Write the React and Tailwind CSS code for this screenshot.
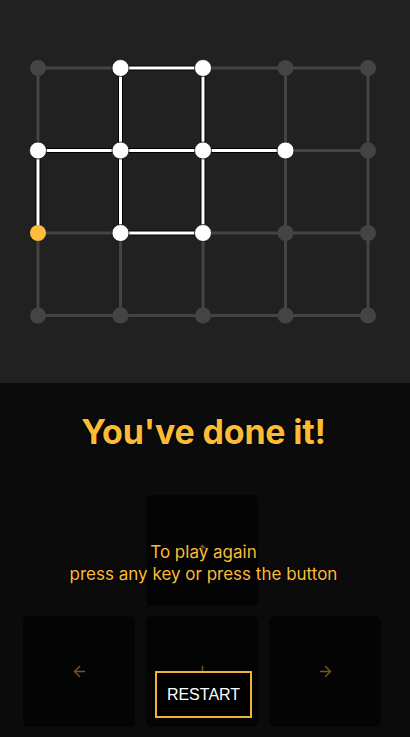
import { ArrowLeft, ArrowRight, ArrowUp, ArrowDown } from 'lucide-react'

const COLS = 5
const ROWS = 4
const X0 = 38
const Y0 = 68
const STEP = 82.5

const px = (i) => X0 + i * STEP
const py = (j) => Y0 + j * STEP

// path drawn so far
const trail = [
    [[1, 0], [2, 0]],
    [[1, 0], [1, 1]],
    [[2, 0], [2, 1]],
    [[0, 1], [1, 1]],
    [[1, 1], [2, 1]],
    [[2, 1], [3, 1]],
    [[0, 1], [0, 2]],
    [[1, 1], [1, 2]],
    [[2, 1], [2, 2]],
    [[1, 2], [2, 2]],
]
const visited = ['1,0', '2,0', '0,1', '1,1', '2,1', '3,1', '1,2', '2,2']
const current = '0,2'

const Board = () => {
    const gridLines = []
    for (let j = 0; j < ROWS; j++) {
        gridLines.push(<line key={`h${j}`} x1={px(0)} y1={py(j)} x2={px(COLS - 1)} y2={py(j)} stroke="#444" strokeWidth="3" />)
    }
    for (let i = 0; i < COLS; i++) {
        gridLines.push(<line key={`v${i}`} x1={px(i)} y1={py(0)} x2={px(i)} y2={py(ROWS - 1)} stroke="#444" strokeWidth="3" />)
    }

    const dots = []
    for (let j = 0; j < ROWS; j++) {
        for (let i = 0; i < COLS; i++) {
            const k = `${i},${j}`
            if (k === current) {
                dots.push(<circle key={k} cx={px(i)} cy={py(j)} r="8" fill="#fbbd3a" />)
            } else if (visited.includes(k)) {
                dots.push(<circle key={k} cx={px(i)} cy={py(j)} r="8.5" fill="#fff" stroke="#111" strokeWidth="0.8" />)
            } else {
                dots.push(<circle key={k} cx={px(i)} cy={py(j)} r="8" fill="#444" />)
            }
        }
    }

    return (
        <svg width="410" height="383" viewBox="0 0 410 383">
            {gridLines}
            {trail.map(([a, b], n) => (
                <line key={`s${n}`} x1={px(a[0])} y1={py(a[1])} x2={px(b[0])} y2={py(b[1])} stroke="#000" strokeWidth="5" strokeLinecap="round" />
            ))}
            {trail.map(([a, b], n) => (
                <line key={`w${n}`} x1={px(a[0])} y1={py(a[1])} x2={px(b[0])} y2={py(b[1])} stroke="#fff" strokeWidth="3" strokeLinecap="round" />
            ))}
            {dots}
        </svg>
    )
}

const Key = ({ icon: Icon }) => (
    <div className="h-[111px] rounded-md bg-[#040404] flex items-center justify-center">
        <Icon size={17} strokeWidth={2} className="text-[#fbbd3a] opacity-45" />
    </div>
)

export default function App() {
    return (
        <div className="w-[410px] h-[737px] flex flex-col overflow-hidden bg-[#0b0b0b] font-['Inter',sans-serif]">
            {/* board */}
            <section className="h-[383px] bg-[#212121] shrink-0">
                <Board />
            </section>

            {/* result */}
            <section className="flex-1 flex flex-col items-center relative pr-[3px]">
                <h1 className="mt-[27px] text-[34px] leading-[43px] font-bold tracking-[-0.2px] text-[#fcbb36] [text-shadow:0_0_2px_#000,0_0_2px_#000]">
                    You've done it!
                </h1>

                <div className="mt-[42px] self-start ml-[23px] grid grid-cols-[112px_112px_112px] gap-x-[11px] gap-y-[10px]">
                    <div />
                    <Key icon={ArrowUp} />
                    <div />
                    <Key icon={ArrowLeft} />
                    <Key icon={ArrowDown} />
                    <Key icon={ArrowRight} />
                </div>

                {/* overlay */}
                <div className="absolute left-0 right-[3px] top-[158px] flex flex-col items-center">
                    <p className="text-[17px] leading-[22px] text-center text-[#fcbb36] [text-shadow:0_0_2px_#000,0_0_2px_#000]">
                        To play again
                        <br />
                        press any key or press the button
                    </p>
                    <button className="mt-[86px] w-[97px] h-[47px] border-2 border-[#f2b233] bg-black text-white text-[16px] font-['Liberation_Sans',sans-serif] outline outline-1 outline-black -outline-offset-4">
                        RESTART
                    </button>
                </div>
            </section>
        </div>
    )
}
